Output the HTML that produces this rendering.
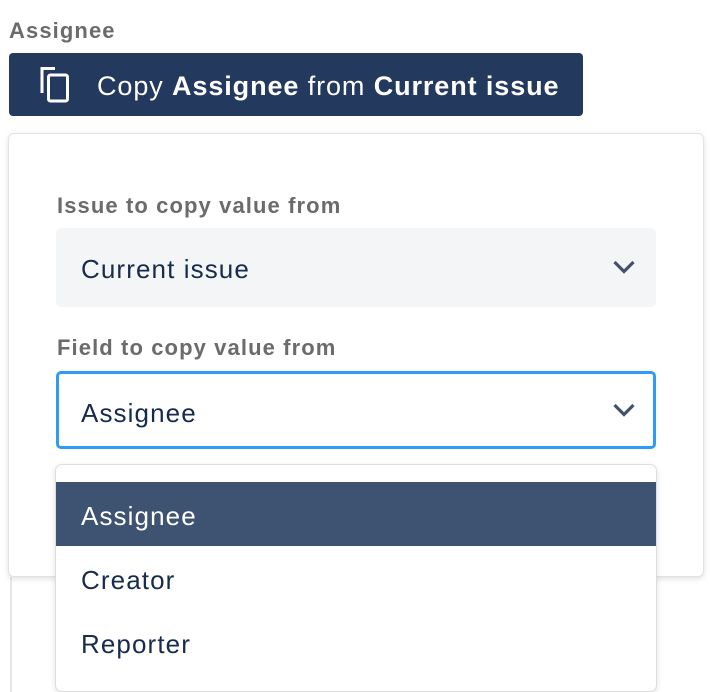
<!DOCTYPE html>
<html><head><meta charset="utf-8"><style>
*{box-sizing:border-box;margin:0;padding:0}
body{width:710px;height:692px;background:#fff;font-family:"Liberation Sans",sans-serif;position:relative;overflow:hidden}
.abs{position:absolute}
.lbl{color:#6b6b6b;font-weight:bold;font-size:22px;letter-spacing:1.1px}
.btn{left:9px;top:53px;width:574px;height:63px;background:#23395d;border-radius:4px;color:#fff;font-size:27px;letter-spacing:0.9px;line-height:66px;padding-left:88px;white-space:nowrap}
.panel{left:8px;top:133px;width:696px;height:444px;background:#fff;border:1px solid #e1e3e6;border-radius:6px;box-shadow:0 2px 6px rgba(0,0,0,.12)}
.sel{left:56px;width:600px;height:79px;border-radius:5px;color:#172b4d;font-size:26px;letter-spacing:1.1px;line-height:82px;padding-left:25px}
.menu{left:55px;top:464px;width:602px;height:228px;background:#fff;border:1px solid #ddd;border-radius:7px;box-shadow:0 2px 6px rgba(0,0,0,.12);overflow:hidden}
.item{position:absolute;left:0;width:100%;height:64px;line-height:68px;padding-left:25px;font-size:26px;letter-spacing:1.1px;color:#172b4d}
</style></head><body>
<div class="abs" style="left:10px;top:577px;width:2px;height:115px;background:#e4e6ea"></div>
<div class="abs lbl" style="left:9px;top:18px">Assignee</div>
<div class="abs btn">Copy <b>Assignee</b> from <b>Current issue</b>
<svg class="abs" style="left:30px;top:13px" width="34" height="38" viewBox="0 0 34 38"><path d="M4 2.5h12" stroke="#fff" stroke-width="3" fill="none"/><path d="M3 1v26" stroke="#fff" stroke-width="3"/><rect x="9.5" y="9" width="19" height="26" rx="2" stroke="#fff" stroke-width="3" fill="none"/></svg>
</div>
<div class="abs panel"></div>
<div class="abs lbl" style="left:57px;top:193px">Issue to copy value from</div>
<div class="abs sel" style="top:228px;background:#f4f5f7">Current issue
<svg class="abs" style="left:556px;top:31px" width="24" height="16" viewBox="0 0 24 16"><path d="M2.5 3l9.5 9.5 9.5-9.5" stroke="#42526e" stroke-width="3.2" fill="none"/></svg></div>
<div class="abs lbl" style="left:57px;top:335px">Field to copy value from</div>
<div class="abs sel" style="top:371px;height:78px;border:3px solid #2f9af7;border-radius:5px;line-height:78px;padding-left:22px">Assignee
<svg class="abs" style="left:553px;top:28px" width="24" height="16" viewBox="0 0 24 16"><path d="M2.5 3l9.5 9.5 9.5-9.5" stroke="#42526e" stroke-width="3.2" fill="none"/></svg></div>
<div class="abs menu">
<div class="item" style="top:17px;background:#3e5372;color:#fff">Assignee</div>
<div class="item" style="top:81px">Creator</div>
<div class="item" style="top:145px">Reporter</div>
</div>
</body></html>
